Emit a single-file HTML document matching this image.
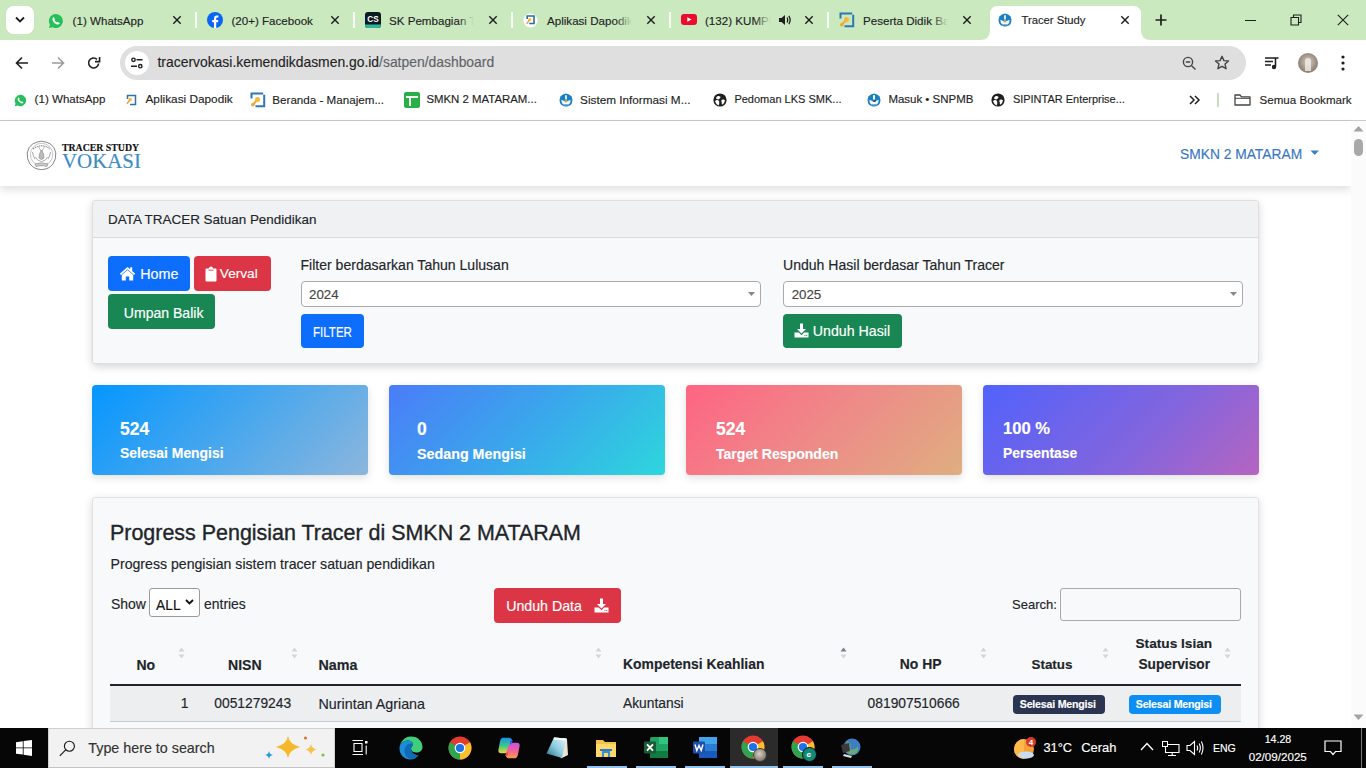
<!DOCTYPE html>
<html><head><meta charset="utf-8">
<style>
*{margin:0;padding:0;box-sizing:border-box}
html,body{width:1366px;height:768px;overflow:hidden;background:#fff;font-family:"Liberation Sans",sans-serif}
.a{position:absolute}
.t{position:absolute;white-space:nowrap;line-height:1;-webkit-text-stroke:0.15px currentColor}
#tabs{left:0;top:0;width:1366px;height:40px;background:#cae9bf}
.tabtxt{font-size:11.6px;color:#1f1f1f;top:14.5px}
.tx{font-size:14px;color:#1f1f1f}
.sep{position:absolute;top:12px;width:2px;height:17px;background:#fff;opacity:.9}
#toolbar{left:0;top:40px;width:1366px;height:46px;background:#fff}
#omni{left:120px;top:46px;width:1126px;height:34px;border-radius:17px;background:#dfdfdf}
#bm{left:0;top:86px;width:1366px;height:33px;background:#fff}
.bmt{font-size:11.6px;color:#1f1f1f;top:93.8px}
#pgline{left:0;top:120px;width:1366px;height:1px;background:#c9c9c9}
#page{left:0;top:121px;width:1351px;height:607px;background:#fff;overflow:hidden}
#scroll{left:1351px;top:120px;width:15px;height:608px;background:#f1f1f1}
#taskbar{left:0;top:728px;width:1366px;height:40px;background:#060606}

.btn{border-radius:4px}
.wt{color:#fff;font-size:13.8px}
.dk{color:#212529;font-size:13.95px}
.dk2{color:#444;font-size:13.31px}
.sel{background:#fff;border:1px solid #aaa;border-radius:4px}
.stat{top:385px;width:276px;height:90px;border-radius:4px;box-shadow:0 3px 8px rgba(0,0,0,.12)}
.sn{top:421px;font-size:17.5px;font-weight:bold;color:#fff}
.sl{top:446.5px;font-size:13.91px;font-weight:bold;color:#fff}
.th{top:657.9px;font-size:13.91px;font-weight:bold;color:#212529}
.td{top:697px;font-size:13.82px;color:#212529}
.badge{top:695px;width:92px;height:19px;border-radius:4px}
.bt{top:699px;font-size:10.6px;font-weight:bold;color:#fff;letter-spacing:-0.2px}
</style></head><body>
<!-- TAB STRIP -->
<div id="tabs" class="a">
  <div class="a" style="left:6px;top:6px;width:28px;height:28px;background:#fff;border-radius:8px"></div>
  <svg class="a" style="left:14px;top:16px" width="12" height="8" viewBox="0 0 12 8"><path d="M2 1.5 L6 5.5 L10 1.5" fill="none" stroke="#1f1f1f" stroke-width="1.8"/></svg>
  <!-- WA -->
  <svg class="a" style="left:48px;top:13px" width="16" height="16" viewBox="0 0 16 16"><path d="M8 1 A7 7 0 1 1 4.6 14.2 L1 15 L1.9 11.6 A7 7 0 0 1 8 1Z" fill="#25c05a"/><path d="M5.2 4.6 C5.6 4.2 6 4.3 6.2 4.7 L6.9 6.2 C7 6.5 6.8 6.8 6.5 7.1 C7 8.1 7.9 9 8.9 9.5 C9.2 9.2 9.5 9 9.8 9.1 L11.3 9.8 C11.7 10 11.8 10.4 11.4 10.8 C10.6 11.8 9.5 11.8 8 11 C6.5 10.2 5.3 8.9 4.7 7.4 C4.2 6.1 4.5 5.2 5.2 4.6Z" fill="#fff"/></svg>
  <div class="t tabtxt" style="left:72.6px">(1) WhatsApp</div>
  <svg class="a" style="left:172px;top:15px" width="10" height="10" viewBox="0 0 10 10"><path d="M1.3 1.3 L8.7 8.7 M8.7 1.3 L1.3 8.7" stroke="#1f1f1f" stroke-width="1.4"/></svg><div class="a" style="left:195px;top:12px;width:2px;height:16px;background:#fff;opacity:.85"></div>
  <!-- FB -->
  <svg class="a" style="left:207px;top:12px" width="16" height="16" viewBox="0 0 16 16"><circle cx="8" cy="8" r="8" fill="#0a66f0"/><path d="M9.2 16 V10.2 H11 L11.3 8 H9.2 V6.7 C9.2 6 9.5 5.6 10.3 5.6 H11.4 V3.6 C11 3.5 10.4 3.4 9.8 3.4 C8 3.4 7 4.4 7 6.3 V8 H5.2 V10.2 H7 V16Z" fill="#fff"/></svg>
  <div class="t tabtxt" style="left:231.4px">(20+) Facebook</div>
  <svg class="a" style="left:330px;top:15px" width="10" height="10" viewBox="0 0 10 10"><path d="M1.3 1.3 L8.7 8.7 M8.7 1.3 L1.3 8.7" stroke="#1f1f1f" stroke-width="1.4"/></svg><div class="a" style="left:353px;top:12px;width:2px;height:16px;background:#fff;opacity:.85"></div>
  <!-- CS -->
  <svg class="a" style="left:365px;top:12px" width="16" height="16" viewBox="0 0 16 16"><rect x="0" y="0" width="16" height="16" rx="3" fill="#0c1b22"/><path d="M0 12.5 H16 V13 A3 3 0 0 1 13 16 H3 A3 3 0 0 1 0 13Z" fill="#2fb59a"/><text x="8" y="10.2" text-anchor="middle" font-family="Liberation Sans" font-weight="bold" font-size="8.2" fill="#fff">CS</text></svg>
  <div class="t tabtxt" style="left:389px">SK Pembagian T</div>
  <div class="a" style="left:458px;top:9px;width:22px;height:22px;background:linear-gradient(90deg,rgba(202,233,191,0),#cae9bf 72%)"></div>
  <svg class="a" style="left:488px;top:15px" width="10" height="10" viewBox="0 0 10 10"><path d="M1.3 1.3 L8.7 8.7 M8.7 1.3 L1.3 8.7" stroke="#1f1f1f" stroke-width="1.4"/></svg><div class="a" style="left:511px;top:12px;width:2px;height:16px;background:#fff;opacity:.85"></div>
  <!-- Dapodik -->
  <svg class="a" style="left:523px;top:13px" width="15" height="15" viewBox="0 0 15 15"><circle cx="7.5" cy="7.5" r="7" fill="#fbfdff"/><path d="M4.2 6 V3 H11 V10.5 H6.2" fill="none" stroke="#2f6b9a" stroke-width="1.6"/><circle cx="6.8" cy="6.6" r="1.6" fill="#f3bd3a"/><path d="M6 7.5 L3.8 10.8" stroke="#e8a04a" stroke-width="1.4"/></svg>
  <div class="t tabtxt" style="left:547px">Aplikasi Dapodik</div>
  <div class="a" style="left:616px;top:9px;width:22px;height:22px;background:linear-gradient(90deg,rgba(202,233,191,0),#cae9bf 72%)"></div>
  <svg class="a" style="left:646px;top:15px" width="10" height="10" viewBox="0 0 10 10"><path d="M1.3 1.3 L8.7 8.7 M8.7 1.3 L1.3 8.7" stroke="#1f1f1f" stroke-width="1.4"/></svg><div class="a" style="left:669px;top:12px;width:2px;height:16px;background:#fff;opacity:.85"></div>
  <!-- YT -->
  <svg class="a" style="left:681px;top:14px" width="16" height="11" viewBox="0 0 16 11"><rect x="0" y="0" width="16" height="11" rx="3" fill="#ec0a2d"/><path d="M6.3 3.2 L10.6 5.5 L6.3 7.8Z" fill="#fff"/></svg>
  <div class="t tabtxt" style="left:705px">(132) KUMPU</div>
  <div class="a" style="left:755px;top:9px;width:22px;height:22px;background:linear-gradient(90deg,rgba(202,233,191,0),#cae9bf 72%)"></div>
  <svg class="a" style="left:778px;top:13px" width="14" height="14" viewBox="0 0 14 14"><path d="M1 5 H3.5 L7 2 V12 L3.5 9 H1Z" fill="#1f1f1f"/><path d="M9 4.5 Q10.5 7 9 9.5 M10.8 2.8 Q13.5 7 10.8 11.2" fill="none" stroke="#1f1f1f" stroke-width="1.3"/></svg>
  <svg class="a" style="left:804px;top:15px" width="10" height="10" viewBox="0 0 10 10"><path d="M1.3 1.3 L8.7 8.7 M8.7 1.3 L1.3 8.7" stroke="#1f1f1f" stroke-width="1.4"/></svg><div class="a" style="left:827px;top:12px;width:2px;height:16px;background:#fff;opacity:.85"></div>
  <!-- Peserta -->
  <svg class="a" style="left:839px;top:12px" width="16" height="16" viewBox="0 0 16 16"><path d="M1.5 6.5 V1.5 H13.2 M14.2 2.8 V14.2 H5.5" fill="none" stroke="#2d78b4" stroke-width="2"/><circle cx="7.5" cy="7.5" r="2.5" fill="#f5b73c"/><path d="M6.3 9 L3 12.5" stroke="#eeaa35" stroke-width="2"/><circle cx="2.8" cy="12.8" r="1.8" fill="#eda82f"/></svg>
  <div class="t tabtxt" style="left:863px">Peserta Didik Ba</div>
  <div class="a" style="left:932px;top:9px;width:22px;height:22px;background:linear-gradient(90deg,rgba(202,233,191,0),#cae9bf 72%)"></div>
  <svg class="a" style="left:962px;top:15px" width="10" height="10" viewBox="0 0 10 10"><path d="M1.3 1.3 L8.7 8.7 M8.7 1.3 L1.3 8.7" stroke="#1f1f1f" stroke-width="1.4"/></svg>
  <!-- active tab -->
  <svg class="a" style="left:980px;top:6px" width="171" height="34" viewBox="0 0 171 34"><path d="M0 34 Q10 34 10 24 V8 Q10 0 18 0 H153 Q161 0 161 8 V24 Q161 34 171 34Z" fill="#fff"/></svg>
  <svg class="a" style="left:998px;top:12.5px" width="14" height="14" viewBox="0 0 14 14"><path d="M7 0.4 Q10.5 0.6 12.6 3.5 Q14 6.5 13 10 Q11.5 13.4 7 13.6 Q2.5 13.4 1 10 Q0 6.5 1.4 3.5 Q3.5 0.6 7 0.4Z" fill="#1b7fc0"/><path d="M2.3 6.8 Q7 9.5 11.7 6.8 Q11.6 10.2 9.8 11.2 H4.2 Q2.4 10.2 2.3 6.8Z" fill="#f2f8fc"/><circle cx="7" cy="8.2" r="1.3" fill="#c9a85a"/><path d="M6 2.2 H8 V6.5 H6Z" fill="#cfe6f6"/><path d="M4 11.8 H10" stroke="#9cc8e8" stroke-width=".8"/></svg>
  <div class="t tabtxt" style="left:1021.5px;font-size:11.25px">Tracer Study</div>
  <svg class="a" style="left:1120px;top:15px" width="10" height="10" viewBox="0 0 10 10"><path d="M1.3 1.3 L8.7 8.7 M8.7 1.3 L1.3 8.7" stroke="#1f1f1f" stroke-width="1.4"/></svg>
  <svg class="a" style="left:1155px;top:14px" width="12" height="12" viewBox="0 0 12 12"><path d="M6 0.5 V11.5 M0.5 6 H11.5" stroke="#1f1f1f" stroke-width="1.7"/></svg>
  <!-- window controls -->
  <div class="a" style="left:1245px;top:20px;width:11px;height:1px;background:#1f1f1f"></div>
  <svg class="a" style="left:1290px;top:14px" width="12" height="12" viewBox="0 0 12 12"><path d="M1 3.5 H8.5 V11 H1Z M3.5 3.5 V1 H11 V8.5 H8.5" fill="none" stroke="#1f1f1f" stroke-width="1.1"/></svg>
  <svg class="a" style="left:1337px;top:14px" width="12" height="12" viewBox="0 0 12 12"><path d="M0.8 0.8 L11.2 11.2 M11.2 0.8 L0.8 11.2" stroke="#1f1f1f" stroke-width="1.1"/></svg>
</div>
<!-- TOOLBAR -->
<div id="toolbar" class="a"></div>
<svg class="a" style="left:15px;top:56px" width="14" height="14" viewBox="0 0 14 14"><path d="M13 7 H1.8 M7 1.5 L1.5 7 L7 12.5" fill="none" stroke="#1f1f1f" stroke-width="1.6"/></svg>
<svg class="a" style="left:51px;top:56px" width="14" height="14" viewBox="0 0 14 14"><path d="M1 7 H12.2 M7 1.5 L12.5 7 L7 12.5" fill="none" stroke="#9c9c9c" stroke-width="1.6"/></svg>
<svg class="a" style="left:87px;top:56px" width="14" height="14" viewBox="0 0 14 14"><path d="M11.6 7.5 A5 5 0 1 1 10 3.3" fill="none" stroke="#1f1f1f" stroke-width="1.6"/><path d="M12.6 1 V5.6 H8" fill="none" stroke="#1f1f1f" stroke-width="1.6"/></svg>
<div id="omni" class="a"></div>
<div class="a" style="left:125px;top:51px;width:24px;height:24px;border-radius:50%;background:#fff"></div>
<svg class="a" style="left:130px;top:56px" width="14" height="14" viewBox="0 0 14 14"><circle cx="3.5" cy="3.8" r="1.7" fill="none" stroke="#1f1f1f" stroke-width="1.4"/><path d="M6.5 3.8 H12.5 M1 10.2 H7" stroke="#1f1f1f" stroke-width="1.4"/><circle cx="10.3" cy="10.2" r="1.7" fill="none" stroke="#1f1f1f" stroke-width="1.4"/></svg>
<div class="t tx" style="left:157.5px;top:56px;font-size:13.9px">tracervokasi.kemendikdasmen.go.id<span style="color:#5f6368">/satpen/dashboard</span></div>
<svg class="a" style="left:1182px;top:56px" width="15" height="15" viewBox="0 0 15 15"><circle cx="6" cy="6" r="4.6" fill="none" stroke="#444" stroke-width="1.4"/><path d="M3.8 6 H8.2 M9.4 9.4 L13.5 13.5" stroke="#444" stroke-width="1.4"/></svg>
<svg class="a" style="left:1214px;top:55px" width="16" height="16" viewBox="0 0 16 16"><path d="M8 1.3 L9.9 5.6 L14.5 6 L11 9.1 L12.1 13.7 L8 11.3 L3.9 13.7 L5 9.1 L1.5 6 L6.1 5.6Z" fill="none" stroke="#444" stroke-width="1.4" stroke-linejoin="round"/></svg>
<svg class="a" style="left:1264px;top:56px" width="16" height="14" viewBox="0 0 16 14"><path d="M1 2 H11 M1 5.5 H9 M1 9 H7" stroke="#1f1f1f" stroke-width="1.6"/><path d="M11.5 10.5 V2 H14.5" fill="none" stroke="#1f1f1f" stroke-width="1.6"/><circle cx="10" cy="11" r="2.2" fill="#1f1f1f"/></svg>
<div class="a" style="left:1298px;top:53px;width:20px;height:20px;border-radius:50%;background:radial-gradient(circle at 50% 45%,#d8d4cc 0%,#a59a8c 45%,#6e6053 100%)"></div>
<div class="a" style="left:1305px;top:58px;width:6px;height:13px;border-radius:3px 3px 0 0;background:#efece6;opacity:.8"></div>
<svg class="a" style="left:1340px;top:55px" width="6" height="16" viewBox="0 0 6 16"><circle cx="3" cy="2" r="1.6" fill="#1f1f1f"/><circle cx="3" cy="8" r="1.6" fill="#1f1f1f"/><circle cx="3" cy="14" r="1.6" fill="#1f1f1f"/></svg>
<!-- BOOKMARKS -->
<div id="bm" class="a"></div>
<svg class="a" style="left:14px;top:93.5px" width="13" height="13" viewBox="0 0 16 16"><path d="M8 1 A7 7 0 1 1 4.6 14.2 L1 15 L1.9 11.6 A7 7 0 0 1 8 1Z" fill="#25c05a"/><path d="M5.2 4.6 C5.6 4.2 6 4.3 6.2 4.7 L6.9 6.2 C7 6.5 6.8 6.8 6.5 7.1 C7 8.1 7.9 9 8.9 9.5 C9.2 9.2 9.5 9 9.8 9.1 L11.3 9.8 C11.7 10 11.8 10.4 11.4 10.8 C10.6 11.8 9.5 11.8 8 11 C6.5 10.2 5.3 8.9 4.7 7.4 C4.2 6.1 4.5 5.2 5.2 4.6Z" fill="#fff"/></svg>
<div class="t bmt" style="left:34.6px;font-size:11.58px">(1) WhatsApp</div>
<svg class="a" style="left:125px;top:94px" width="12" height="12" viewBox="0 0 12 12"><path d="M2.5 5 V1.5 H10.5 V10.5 H5" fill="none" stroke="#2f72a8" stroke-width="1.5"/><circle cx="5.3" cy="5.5" r="1.7" fill="#f3bd3a"/><path d="M4.5 6.5 L2 9.8" stroke="#e8a04a" stroke-width="1.6"/></svg>
<div class="t bmt" style="left:145.5px;font-size:11.81px">Aplikasi Dapodik</div>
<svg class="a" style="left:250px;top:92px" width="16" height="16" viewBox="0 0 16 16"><path d="M1.5 6.5 V1.5 H13.2 M14.2 2.8 V14.2 H5.5" fill="none" stroke="#2d78b4" stroke-width="2"/><circle cx="7.5" cy="7.5" r="2.5" fill="#f5b73c"/><path d="M6.3 9 L3 12.5" stroke="#eeaa35" stroke-width="2"/><circle cx="2.8" cy="12.8" r="1.8" fill="#eda82f"/></svg>
<div class="t bmt" style="left:272.3px;font-size:11.64px">Beranda - Manajem...</div>
<svg class="a" style="left:404px;top:92px" width="16" height="16" viewBox="0 0 16 16"><rect x="0" y="0" width="16" height="16" rx="2" fill="#2aae48"/><path d="M2 5 H14 M6 5 V14" stroke="#effff2" stroke-width="2"/></svg>
<div class="t bmt" style="left:426.4px;font-size:11.42px">SMKN 2 MATARAM...</div>
<svg class="a" style="left:559px;top:93px" width="14" height="14" viewBox="0 0 14 14"><path d="M7 0.4 Q10.5 0.6 12.6 3.5 Q14 6.5 13 10 Q11.5 13.4 7 13.6 Q2.5 13.4 1 10 Q0 6.5 1.4 3.5 Q3.5 0.6 7 0.4Z" fill="#1b7fc0"/><path d="M2.3 6.8 Q7 9.5 11.7 6.8 Q11.6 10.2 9.8 11.2 H4.2 Q2.4 10.2 2.3 6.8Z" fill="#f2f8fc"/><circle cx="7" cy="8.2" r="1.3" fill="#c9a85a"/><path d="M6 2.2 H8 V6.5 H6Z" fill="#cfe6f6"/><path d="M4 11.8 H10" stroke="#9cc8e8" stroke-width=".8"/></svg>
<div class="t bmt" style="left:580.1px;font-size:11.76px">Sistem Informasi M...</div>
<svg class="a" style="left:713px;top:93px" width="14" height="14" viewBox="0 0 14 14"><circle cx="7" cy="7" r="6.6" fill="#1f1f1f"/><path d="M2 8.3 Q3.3 6.6 5.2 7.3 Q6.6 8 6.2 9.6 Q6.6 11.3 5.5 12.6 Q3 11.3 2 8.3Z M4.3 3.2 Q6 2.6 7.2 3.6 Q8 4.8 6.8 5.4 Q5.6 5.6 5.8 6.6 Q4.2 6.6 3.2 5.8 Q2.6 4.6 4.3 3.2Z M8.7 6.8 Q10.5 6.2 12 7.2 Q11.6 10 9.4 11.8 Q8.5 10.8 8.8 9.6 Q7.8 8.3 8.7 6.8Z" fill="#fff"/></svg>
<div class="t bmt" style="left:734.4px;font-size:11.02px">Pedoman LKS SMK...</div>
<svg class="a" style="left:867px;top:92.5px" width="14" height="14" viewBox="0 0 14 14"><path d="M7 0.4 Q10.5 0.6 12.6 3.5 Q14 6.5 13 10 Q11.5 13.4 7 13.6 Q2.5 13.4 1 10 Q0 6.5 1.4 3.5 Q3.5 0.6 7 0.4Z" fill="#1b7fc0"/><path d="M2.3 6.8 Q7 9.5 11.7 6.8 Q11.6 10.2 9.8 11.2 H4.2 Q2.4 10.2 2.3 6.8Z" fill="#f2f8fc"/><path d="M5 8.5 L9 7.3 L8.5 9 Z" fill="#333"/><path d="M6 2.2 H8 V6.5 H6Z" fill="#fff"/><path d="M4 11.8 H10" stroke="#9cc8e8" stroke-width=".8"/></svg>
<div class="t bmt" style="left:888.4px;font-size:11.48px">Masuk • SNPMB</div>
<svg class="a" style="left:991px;top:93px" width="14" height="14" viewBox="0 0 14 14"><circle cx="7" cy="7" r="6.6" fill="#1f1f1f"/><path d="M2 8.3 Q3.3 6.6 5.2 7.3 Q6.6 8 6.2 9.6 Q6.6 11.3 5.5 12.6 Q3 11.3 2 8.3Z M4.3 3.2 Q6 2.6 7.2 3.6 Q8 4.8 6.8 5.4 Q5.6 5.6 5.8 6.6 Q4.2 6.6 3.2 5.8 Q2.6 4.6 4.3 3.2Z M8.7 6.8 Q10.5 6.2 12 7.2 Q11.6 10 9.4 11.8 Q8.5 10.8 8.8 9.6 Q7.8 8.3 8.7 6.8Z" fill="#fff"/></svg>
<div class="t bmt" style="left:1012.9px;font-size:10.98px">SIPINTAR Enterprise...</div>
<svg class="a" style="left:1189px;top:95px" width="11" height="10" viewBox="0 0 11 10"><path d="M1 1 L5 5 L1 9 M6 1 L10 5 L6 9" fill="none" stroke="#1f1f1f" stroke-width="1.5"/></svg>
<div class="a" style="left:1217px;top:93px;width:2px;height:14px;background:#c8dcc0"></div>
<svg class="a" style="left:1234px;top:94px" width="17" height="12" viewBox="0 0 17 12"><path d="M1 1 H6 L7.5 2.8 H16 V11 H1Z" fill="none" stroke="#444" stroke-width="1.3" stroke-linejoin="round"/><path d="M1 4.3 H16" stroke="#444" stroke-width="1"/></svg>
<div class="t bmt" style="left:1259.5px">Semua Bookmark</div>
<div id="pgline" class="a"></div>

<!-- PAGE -->
<div id="page" class="a">
</div>
<div class="a" style="left:0;top:121px;width:1351px;height:65px;background:#fff;box-shadow:0 4px 8px rgba(0,0,0,.12)"></div>
<!-- logo -->
<svg class="a" style="left:26px;top:140px" width="31" height="31" viewBox="0 0 31 31">
 <path d="M15.5 1.2 Q20 1.5 24.5 4 Q28.8 7 29.8 13 Q30.2 19 27 24 Q23 29.3 15.5 29.6 Q8 29.3 4 24 Q0.8 19 1.2 13 Q2.2 7 6.5 4 Q11 1.5 15.5 1.2Z" fill="#fff" stroke="#777" stroke-width="0.9"/>
 <circle cx="15.6" cy="14.5" r="11.2" fill="none" stroke="#aaa" stroke-width="0.7"/>
 <path d="M7 9 Q15.5 2.5 24 9" fill="none" stroke="#999" stroke-width="1.3" stroke-dasharray="1.4 0.8"/>
 <path d="M12.5 6.5 L15.5 12 L18.5 6.5" fill="none" stroke="#aaa" stroke-width="0.8"/>
 <path d="M15.5 10 Q12.5 14 13 18 Q15.5 21 18 18 Q18.5 14 15.5 10Z" fill="#bbb" stroke="#888" stroke-width="0.6"/>
 <path d="M9.5 17 Q11 21 15.5 21.5 Q20 21 21.5 17" fill="none" stroke="#999" stroke-width="0.8"/>
 <path d="M6.5 12 Q7 16 9 19 M24.5 12 Q24 16 22 19" fill="none" stroke="#999" stroke-width="0.9"/>
 <path d="M9 24 Q15.5 21.5 22 24 L21 26.5 Q15.5 24.5 10 26.5Z" fill="#ccc" stroke="#888" stroke-width="0.6"/>
</svg>
<div class="t" style="left:62px;top:142.5px;font-family:'Liberation Serif',serif;font-weight:bold;font-size:9.8px;color:#111">TRACER STUDY</div>
<div class="t" style="left:62px;top:151.3px;font-family:'Liberation Serif',serif;font-size:20.9px;color:#3b8cc0">VOKASI</div>
<div class="t" style="left:1180px;top:148.2px;font-size:13.8px;color:#3877c0">SMKN 2 MATARAM</div>
<svg class="a" style="left:1310px;top:150px" width="10" height="6"><path d="M0.5 0.5 H9 L4.75 5 Z" fill="#3b7fc4"/></svg>

<!-- card 1 -->
<div class="a" style="left:92px;top:200px;width:1167px;height:164px;background:#f8f9fa;border:1px solid #dcdee0;border-radius:3px;box-shadow:0 3px 9px rgba(0,0,0,.16);overflow:hidden">
  <div class="a" style="left:0;top:0;width:1167px;height:37px;background:#f0f1f3;border-bottom:1px solid #d9dbde"></div>
</div>
<div class="t" style="left:108px;top:213px;font-size:13.45px;color:#212529">DATA TRACER Satuan Pendidikan</div>
<div class="a btn" style="left:108px;top:256px;width:82px;height:35px;background:#0d6efd"></div>
<div class="a btn" style="left:194px;top:256px;width:77px;height:35px;background:#dc3545"></div>
<div class="a btn" style="left:108px;top:294px;width:107px;height:35px;background:#198754"></div>
<svg class="a" style="left:119px;top:266px" width="17" height="15" viewBox="0 0 17 15"><path d="M8.5 1 L0.8 7.8 L2 9 L8.5 3.2 L15 9 L16.2 7.8 L13.2 5.1 V1.2 H11.2 V3.3Z" fill="#fff"/><path d="M2.8 9 L8.5 4 L14.2 9 V14.6 H10.2 V10.6 H6.8 V14.6 H2.8Z" fill="#fff"/></svg>
<div class="t wt" style="left:140.3px;top:267px;font-size:14.3px">Home</div>
<svg class="a" style="left:205px;top:266px" width="12" height="16" viewBox="0 0 12 16"><path d="M1.5 2.5 H3.8 Q4.3 0.6 6 0.6 Q7.7 0.6 8.2 2.5 H10.5 Q11.5 2.5 11.5 3.5 V14.5 Q11.5 15.5 10.5 15.5 H1.5 Q0.5 15.5 0.5 14.5 V3.5 Q0.5 2.5 1.5 2.5Z" fill="#fff"/><path d="M3.5 4.2 H8.5" stroke="#c9434f" stroke-width="0.9"/></svg>
<div class="t wt" style="left:219.8px;top:267px;font-size:13.65px">Verval</div>
<div class="t wt" style="left:123.8px;top:305.5px;font-size:14.06px">Umpan Balik</div>
<div class="t dk" style="left:300.5px;top:258.2px;font-size:14.05px">Filter berdasarkan Tahun Lulusan</div>
<div class="a sel" style="left:301px;top:281px;width:460px;height:26px"></div>
<div class="t dk2" style="left:309px;top:287.8px">2024</div>
<svg class="a" style="left:748px;top:292px" width="7" height="4"><path d="M0 0 H7 L3.5 4 Z" fill="#888"/></svg>
<div class="a btn" style="left:301px;top:314px;width:63px;height:34px;background:#0d6efd"></div>
<div class="t wt" style="left:312.8px;top:325.5px;font-size:13.75px;transform:scaleX(0.84);transform-origin:0 0">FILTER</div>
<div class="t dk" style="left:783px;top:258.2px;font-size:14.05px">Unduh Hasil berdasar Tahun Tracer</div>
<div class="a sel" style="left:783px;top:281px;width:460px;height:26px"></div>
<div class="t dk2" style="left:791.7px;top:287.8px">2025</div>
<svg class="a" style="left:1230px;top:292px" width="7" height="4"><path d="M0 0 H7 L3.5 4 Z" fill="#888"/></svg>
<div class="a btn" style="left:783px;top:314px;width:119px;height:34px;background:#198754"></div>
<svg class="a" style="left:794px;top:323px" width="15" height="15" viewBox="0 0 15 15"><path d="M6 0.5 H9 V6 H12 L7.5 10.5 L3 6 H6Z" fill="#fff"/><path d="M0.5 9.5 H4.8 L7.5 12.2 L10.2 9.5 H14.5 V14.5 H0.5Z" fill="#fff"/><circle cx="11" cy="12.3" r=".6" fill="#198754"/><circle cx="12.8" cy="12.3" r=".6" fill="#198754"/></svg>
<div class="t wt" style="left:812.8px;top:324px;font-size:14.2px">Unduh Hasil</div>

<!-- stat cards -->
<div class="a stat" style="left:92px;background:linear-gradient(135deg,#0596ff 0%,#55aaea 60%,#8cb6dc 100%)"></div>
<div class="a stat" style="left:389px;background:linear-gradient(135deg,#4a7cf8 0%,#3aa7ec 50%,#2dd6dd 100%)"></div>
<div class="a stat" style="left:686px;background:linear-gradient(135deg,#fe6483 0%,#ee8a88 50%,#dfae80 100%)"></div>
<div class="a stat" style="left:983px;background:linear-gradient(135deg,#5162fb 0%,#8465dd 60%,#b565c0 100%)"></div>
<div class="t sn" style="left:120px">524</div><div class="t sl" style="left:120px">Selesai Mengisi</div>
<div class="t sn" style="left:417px">0</div><div class="t sl" style="left:417px;font-size:14.3px">Sedang Mengisi</div>
<div class="t sn" style="left:716px">524</div><div class="t sl" style="left:716px;font-size:14.05px">Target Responden</div>
<div class="t sn" style="left:1003px;font-size:16.6px">100 %</div><div class="t sl" style="left:1003px">Persentase</div>

<!-- table card -->
<div class="a" style="left:92px;top:497px;width:1167px;height:260px;background:#f8f9fa;border:1px solid #e0e2e4;border-radius:3px;box-shadow:0 3px 9px rgba(0,0,0,.16)"></div>
<div class="t" style="left:110px;top:522.6px;font-size:21.45px;color:#212529;-webkit-text-stroke:0.35px #212529">Progress Pengisian Tracer di SMKN 2 MATARAM</div>
<div class="t dk" style="left:110.5px;top:556.5px;font-size:14.14px">Progress pengisian sistem tracer satuan pendidikan</div>
<div class="t dk" style="left:111px;top:598.3px">Show</div>
<div class="a" style="left:149px;top:588px;width:51px;height:29px;background:#fff;border:1px solid #9a9a9a;border-radius:3px"></div>
<div class="t" style="left:156px;top:598.5px;font-size:13.8px;color:#111">ALL</div>
<svg class="a" style="left:185px;top:599px" width="9" height="6"><path d="M1 1 L4.5 4.5 L8 1" fill="none" stroke="#111" stroke-width="1.8"/></svg>
<div class="t dk" style="left:204px;top:598.3px">entries</div>
<div class="a btn" style="left:494px;top:588px;width:127px;height:35px;background:#dc3545"></div>
<div class="t wt" style="left:506.2px;top:598.8px;font-size:14.2px">Unduh Data</div>
<svg class="a" style="left:594px;top:598px" width="15" height="15" viewBox="0 0 15 15"><path d="M6 0.5 H9 V6 H12 L7.5 10.5 L3 6 H6Z" fill="#fff"/><path d="M0.5 9.5 H4.8 L7.5 12.2 L10.2 9.5 H14.5 V14.5 H0.5Z" fill="#fff"/><circle cx="11" cy="12.3" r=".6" fill="#dc3545"/><circle cx="12.8" cy="12.3" r=".6" fill="#dc3545"/></svg>
<div class="t dk" style="left:1012px;top:598px;font-size:13px">Search:</div>
<div class="a" style="left:1060px;top:588px;width:181px;height:33px;border:1px solid #a9a9a9;border-radius:3px"></div>

<!-- table -->
<div class="a" style="left:110px;top:684px;width:1131px;height:2px;background:#212529"></div>
<div class="a" style="left:110px;top:686px;width:1131px;height:35px;background:#eceef0"></div>
<div class="a" style="left:110px;top:721px;width:1131px;height:1px;background:#c8cacc"></div>
<div class="t th" style="left:136.5px;font-size:14.0px">No</div>
<div class="t th" style="left:228px;font-size:14.1px">NISN</div>
<div class="t th" style="left:318.5px;font-size:14.3px">Nama</div>
<div class="t th" style="left:623px">Kompetensi Keahlian</div>
<div class="t th" style="left:899.8px">No HP</div>
<div class="t th" style="left:1031.5px;font-size:13.42px">Status</div>
<div class="t th" style="left:1135.5px;top:636.9px;font-size:13.67px">Status Isian</div>
<div class="t th" style="left:1138.4px;font-size:13.71px">Supervisor</div>
<svg class="a" style="left:178.0px;top:647px" width="7" height="12" viewBox="0 0 7 12"><path d="M0.5 4.5 L3.5 0.5 L6.5 4.5Z" fill="#d3d6d9"/><path d="M0.5 7.5 L3.5 11.5 L6.5 7.5Z" fill="#d3d6d9"/></svg>
<svg class="a" style="left:291.0px;top:647px" width="7" height="12" viewBox="0 0 7 12"><path d="M0.5 4.5 L3.5 0.5 L6.5 4.5Z" fill="#d3d6d9"/><path d="M0.5 7.5 L3.5 11.5 L6.5 7.5Z" fill="#d3d6d9"/></svg>
<svg class="a" style="left:594.9px;top:647px" width="7" height="12" viewBox="0 0 7 12"><path d="M0.5 4.5 L3.5 0.5 L6.5 4.5Z" fill="#d3d6d9"/><path d="M0.5 7.5 L3.5 11.5 L6.5 7.5Z" fill="#d3d6d9"/></svg>
<svg class="a" style="left:839.8px;top:647px" width="7" height="12" viewBox="0 0 7 12"><path d="M0.5 4.5 L3.5 0.5 L6.5 4.5Z" fill="#7a7f85"/><path d="M0.5 7.5 L3.5 11.5 L6.5 7.5Z" fill="#d3d6d9"/></svg>
<svg class="a" style="left:979.7px;top:647px" width="7" height="12" viewBox="0 0 7 12"><path d="M0.5 4.5 L3.5 0.5 L6.5 4.5Z" fill="#d3d6d9"/><path d="M0.5 7.5 L3.5 11.5 L6.5 7.5Z" fill="#d3d6d9"/></svg>
<svg class="a" style="left:1101.8px;top:647px" width="7" height="12" viewBox="0 0 7 12"><path d="M0.5 4.5 L3.5 0.5 L6.5 4.5Z" fill="#d3d6d9"/><path d="M0.5 7.5 L3.5 11.5 L6.5 7.5Z" fill="#d3d6d9"/></svg>
<svg class="a" style="left:1224.2px;top:647px" width="7" height="12" viewBox="0 0 7 12"><path d="M0.5 4.5 L3.5 0.5 L6.5 4.5Z" fill="#d3d6d9"/><path d="M0.5 7.5 L3.5 11.5 L6.5 7.5Z" fill="#d3d6d9"/></svg>
<div class="t td" style="left:180.8px">1</div>
<div class="t td" style="left:214.3px">0051279243</div>
<div class="t td" style="left:318.5px;font-size:14.3px">Nurintan Agriana</div>
<div class="t td" style="left:623px">Akuntansi</div>
<div class="t td" style="left:867.6px">081907510666</div>
<div class="a badge" style="left:1013px;background:#2b3450"></div>
<div class="a badge" style="left:1129px;background:#0d8ef5"></div>
<div class="t bt" style="left:1019.8px">Selesai Mengisi</div>
<div class="t bt" style="left:1135.8px">Selesai Mengisi</div>
<div class="a" style="left:1351px;top:121px;width:15px;height:607px;background:#fbfbfb"></div>
<svg class="a" style="left:1353px;top:125px" width="11" height="7" viewBox="0 0 11 7"><path d="M0.5 6.5 L5.5 1 L10.5 6.5Z" fill="#a3a3a3"/></svg>
<div class="a" style="left:1354px;top:139px;width:9px;height:17px;border-radius:4.5px;background:#a8a8a8"></div>
<svg class="a" style="left:1353px;top:714px" width="11" height="7" viewBox="0 0 11 7"><path d="M0.5 0.5 L5.5 6 L10.5 0.5Z" fill="#a3a3a3"/></svg>

<!-- TASKBAR -->
<div id="taskbar" class="a"></div>
<svg class="a" style="left:16px;top:740px" width="16" height="16" viewBox="0 0 16 16"><path d="M0 2.2 L6.8 1.2 V7.4 H0Z M7.6 1.1 L16 0 V7.4 H7.6Z M0 8.2 H6.8 V14.6 L0 13.7Z M7.6 8.2 H16 V16 L7.6 14.8Z" fill="#fff"/></svg>
<div class="a" style="left:48px;top:728px;width:287px;height:40px;background:#f2f2f2;border:1px solid #cfcfcf;border-bottom:1px solid #c4c4c4"></div>
<svg class="a" style="left:59px;top:739.5px" width="17" height="17" viewBox="0 0 17 17"><circle cx="10.4" cy="6.2" r="5" fill="none" stroke="#1a1a1a" stroke-width="1.15"/><path d="M6.9 9.7 L0.8 15.8" stroke="#1a1a1a" stroke-width="1.2"/></svg>
<div class="t" style="left:88.3px;top:741.4px;font-size:14.3px;color:#333">Type here to search</div>
<svg class="a" style="left:262px;top:734px" width="66" height="28" viewBox="0 0 66 28"><path d="M26 2 Q27.5 10.5 38 13 Q27.5 15.5 26 24 Q24.5 15.5 14 13 Q24.5 10.5 26 2Z" fill="#f5b82a"/><path d="M49 10 Q49.8 14.3 54.5 15.5 Q49.8 16.7 49 21 Q48.2 16.7 43.5 15.5 Q48.2 14.3 49 10Z" fill="#f8c24a"/><path d="M7 17 Q7.5 20.5 11 21 Q7.5 21.5 7 25 Q6.5 21.5 3 21 Q6.5 20.5 7 17Z" fill="#2b9be0"/><circle cx="43.5" cy="4" r="1.6" fill="#e0703a"/><circle cx="61" cy="21" r="1.6" fill="#7cc24a"/></svg>
<svg class="a" style="left:352px;top:740px" width="16" height="15" viewBox="0 0 16 15"><path d="M0.5 0.5 H11 M0.5 14.5 H11 M2 3.5 H10 V11.5 H2Z" fill="none" stroke="#fff" stroke-width="1.1"/><rect x="13" y="1" width="2.5" height="2.5" fill="#fff"/><path d="M14.2 5.5 V14.5" stroke="#fff" stroke-width="1.1"/></svg>
<!-- edge -->
<svg class="a" style="left:399px;top:736px" width="24" height="24" viewBox="0 0 24 24"><defs><linearGradient id="eg1" x1="0" y1="0" x2="1" y2="1"><stop offset="0" stop-color="#33c07a"/><stop offset=".5" stop-color="#1fa0d8"/><stop offset="1" stop-color="#0c59a4"/></linearGradient></defs><path d="M12 0.5 C19 0.5 23.5 5.5 23.5 11 C23.5 14.5 21 16.5 17.5 16.5 C14 16.5 12 15 12 12.5 C12 10.5 14 9.5 14 8.5 C14 6 11 4.5 8.5 4.5 C4 4.5 0.5 8.5 0.5 12.5 C0.5 7 5 0.5 12 0.5Z" fill="#3fcf7a"/><path d="M0.5 12.5 C0.5 8.5 4 4.5 8.5 4.5 C11 4.5 14 6 14 8.5 C14 9.5 12 10.5 12 12.5 C12 17 16 19.5 19.5 19 C17.5 22 14.5 23.5 11.5 23.5 C5 23.5 0.5 18.5 0.5 12.5Z" fill="#1a8fd8"/><path d="M12 12.5 C12 17 16 19.5 19.5 19 C18 21 16 22.5 13 23 C8 23 5.5 19 5.5 15 C5.5 11 8 8 11 7.5 C13 7.8 14 8.5 14 8.5 C14 9.5 12 10.5 12 12.5Z" fill="#0e5aa8" opacity=".7"/></svg>
<!-- chrome -->
<svg class="a" style="left:448px;top:736px" width="24" height="24" viewBox="0 0 24 24"><circle cx="12" cy="12" r="11.5" fill="#e33b2e"/><path d="M12 12 L22 6.3 A11.5 11.5 0 0 1 12 23.5Z" fill="#f8c02a"/><path d="M12 12 L12 23.5 A11.5 11.5 0 0 1 2 6.3Z" fill="#2ea44f"/><circle cx="12" cy="12" r="5.3" fill="#fff"/><circle cx="12" cy="12" r="4.1" fill="#1a73e8"/></svg>
<!-- copilot -->
<svg class="a" style="left:497px;top:737px" width="24" height="22" viewBox="0 0 24 22"><defs><linearGradient id="cp1" x1="0" y1="0" x2="0" y2="1"><stop offset="0" stop-color="#1e8ff0"/><stop offset=".5" stop-color="#35c985"/><stop offset="1" stop-color="#f2d43a"/></linearGradient><linearGradient id="cp2" x1="0" y1="0" x2="0" y2="1"><stop offset="0" stop-color="#c653e6"/><stop offset=".5" stop-color="#f0609a"/><stop offset="1" stop-color="#fb9a4c"/></linearGradient></defs>
<path d="M6 0.8 H12 Q14.5 0.8 15.5 3.5 L13 12 Q11.5 16.5 8 16.2 H4 Q0.8 16.2 1.5 12.5 L3 4.5 Q3.8 0.8 6 0.8Z" fill="url(#cp1)"/>
<path d="M18 21.2 H12 Q9.5 21.2 8.5 18.5 L11 10 Q12.5 5.5 16 5.8 H20 Q23.2 5.8 22.5 9.5 L21 17.5 Q20.2 21.2 18 21.2Z" fill="url(#cp2)"/>
<path d="M13 4 Q14.5 2.5 15.5 3.5 L14 8 Q12.5 6 13 4Z" fill="#2c5fd8"/>
<path d="M11 18 Q9.5 19.5 8.5 18.5 L10 14 Q11.5 16 11 18Z" fill="#e9553a"/>
</svg>
<!-- notepad-ish -->
<svg class="a" style="left:545px;top:736px" width="24" height="24" viewBox="0 0 24 24"><defs><linearGradient id="np1" x1="0" y1="1" x2="1" y2="0"><stop offset="0" stop-color="#1e6f86"/><stop offset=".5" stop-color="#8fcde0"/><stop offset="1" stop-color="#e8f6fa"/></linearGradient></defs>
<path d="M9 1.5 L22 2.5 L23 19 L16 22.5Z" fill="#e9e6d6"/>
<path d="M9 1.5 L21 2.5 L17 22 L1.5 17.5Z" fill="url(#np1)"/>
<path d="M9 1.5 L21 2.5 L20.5 4.5 L8.5 3.5Z" fill="#f4fbfd"/>
</svg>
<!-- explorer -->
<svg class="a" style="left:595px;top:738px" width="22" height="20" viewBox="0 0 22 20"><path d="M1 2 H8 L10 4 H21 V19 H1Z" fill="#f0c24c"/><path d="M1 6 H21 V19 H1Z" fill="#ffd86a"/><path d="M7 13 H15 V19 H13 V15 H9 V19 H7Z" fill="#3a8fd6"/><rect x="5" y="11" width="12" height="2" fill="#2f7bc0"/></svg>
<div class="a" style="left:587px;top:766px;width:40px;height:2px;background:#90c4ee"></div>
<!-- excel -->
<svg class="a" style="left:644px;top:737px" width="24" height="21" viewBox="0 0 24 21"><rect x="6" y="0" width="18" height="21" rx="1.5" fill="#21a366"/><rect x="15" y="0" width="9" height="7" fill="#33c481"/><rect x="6" y="14" width="18" height="7" fill="#107c41"/><rect x="0" y="4.5" width="12" height="12" rx="1" fill="#185c37"/><path d="M3 7.3 L9 13.7 M9 7.3 L3 13.7" stroke="#fff" stroke-width="1.8"/></svg>
<div class="a" style="left:636px;top:766px;width:40px;height:2px;background:#90c4ee"></div>
<!-- word -->
<svg class="a" style="left:693px;top:737px" width="24" height="21" viewBox="0 0 24 21"><rect x="6" y="0" width="18" height="21" rx="1.5" fill="#2b7cd3"/><rect x="6" y="0" width="18" height="7" fill="#41a5ee"/><rect x="6" y="14" width="18" height="7" fill="#185abd"/><rect x="0" y="4.5" width="12" height="12" rx="1" fill="#1f4fa8"/><path d="M2 7.5 L3.8 13.5 L6 8.5 L8.2 13.5 L10 7.5" fill="none" stroke="#fff" stroke-width="1.4"/></svg>
<div class="a" style="left:685px;top:766px;width:40px;height:2px;background:#90c4ee"></div>
<!-- chrome active -->
<div class="a" style="left:730px;top:728px;width:48px;height:40px;background:#2b2b2b"></div>
<svg class="a" style="left:741px;top:735px" width="24" height="24" viewBox="0 0 24 24"><circle cx="12" cy="12" r="11.5" fill="#e33b2e"/><path d="M12 12 L22 6.3 A11.5 11.5 0 0 1 12 23.5Z" fill="#f8c02a"/><path d="M12 12 L12 23.5 A11.5 11.5 0 0 1 2 6.3Z" fill="#2ea44f"/><circle cx="12" cy="12" r="5.3" fill="#fff"/><circle cx="12" cy="12" r="4.1" fill="#1a73e8"/></svg>
<div class="a" style="left:753px;top:748px;width:14px;height:14px;border-radius:50%;background:radial-gradient(circle at 45% 40%,#d6d0c8,#8a7c70 70%,#5a4e44);border:1px solid #3a3a3a"></div>
<div class="a" style="left:730px;top:766px;width:48px;height:2px;background:#90c4ee"></div>
<!-- chrome 2 -->
<svg class="a" style="left:791px;top:735px" width="24" height="24" viewBox="0 0 24 24"><circle cx="12" cy="12" r="11.5" fill="#e33b2e"/><path d="M12 12 L22 6.3 A11.5 11.5 0 0 1 12 23.5Z" fill="#f8c02a"/><path d="M12 12 L12 23.5 A11.5 11.5 0 0 1 2 6.3Z" fill="#2ea44f"/><circle cx="12" cy="12" r="5.3" fill="#fff"/><circle cx="12" cy="12" r="4.1" fill="#1a73e8"/></svg>
<div class="a" style="left:802px;top:747px;width:15px;height:15px;border-radius:50%;background:#138a78;border:1px solid #0b0b0b"></div>
<div class="t" style="left:806.5px;top:751px;font-size:8px;font-weight:bold;color:#fff">c</div>
<div class="a" style="left:783px;top:766px;width:40px;height:2px;background:#90c4ee"></div>
<!-- network/globe app -->
<svg class="a" style="left:840px;top:737px" width="22" height="22" viewBox="0 0 22 22"><circle cx="12" cy="10" r="8.5" fill="#3d7fc0"/><path d="M7 4 Q12 7 10 12 Q15 14 18 9 Q19 14 15 17 Q9 19 6 14Z" fill="#74b46a" opacity=".8"/><path d="M1 8 L9 6 L10 14 L3 16Z" fill="#3a3a3a"/><path d="M4 17 L12 19 L11 21 L3 19Z" fill="#ddd"/></svg>
<div class="a" style="left:832px;top:766px;width:40px;height:2px;background:#90c4ee"></div>
<!-- tray -->
<svg class="a" style="left:1012px;top:737px" width="26" height="22" viewBox="0 0 26 22"><circle cx="12" cy="12" r="10" fill="#f6a23a"/><path d="M12 2 A10 10 0 0 0 12 22 Z" fill="#ffb84a"/><ellipse cx="14" cy="18" rx="8" ry="3.5" fill="#c8ddf5"/><circle cx="19" cy="5" r="5" fill="#d63a2a"/><text x="19" y="8" text-anchor="middle" font-family="Liberation Sans" font-weight="bold" font-size="8" fill="#fff">4</text></svg>
<div class="t" style="left:1043.5px;top:741.9px;font-size:12.8px;color:#fff">31°C</div>
<div class="t" style="left:1081.2px;top:741.9px;font-size:12.92px;color:#fff">Cerah</div>
<svg class="a" style="left:1140px;top:742px" width="14" height="9" viewBox="0 0 14 9"><path d="M1 8 L7 1.5 L13 8" fill="none" stroke="#fff" stroke-width="1.3"/></svg>
<svg class="a" style="left:1162px;top:741px" width="18" height="15" viewBox="0 0 18 15"><path d="M3.5 3.5 H17 V11.5 H3.5Z M10.2 11.5 V14.5 M6 14.5 H14" fill="none" stroke="#fff" stroke-width="1.1"/><rect x="0.5" y="0.5" width="5" height="5" fill="#0b0b0b" stroke="#fff" stroke-width="1"/></svg>
<svg class="a" style="left:1186px;top:740px" width="18" height="16" viewBox="0 0 18 16"><path d="M1 5.5 H4 L8.5 1.5 V14.5 L4 10.5 H1Z" fill="none" stroke="#fff" stroke-width="1.1"/><path d="M11 5.5 Q12.3 8 11 10.5 M13.2 3.5 Q15.5 8 13.2 12.5 M15.4 1.5 Q18.6 8 15.4 14.5" fill="none" stroke="#fff" stroke-width="1.1"/></svg>
<div class="t" style="left:1213px;top:743.2px;font-size:10.52px;color:#fff">ENG</div>
<div class="t" style="left:1264.7px;top:733.6px;font-size:10.63px;color:#fff">14.28</div>
<div class="t" style="left:1248.7px;top:751px;font-size:11.61px;color:#fff">02/09/2025</div>
<svg class="a" style="left:1324px;top:740px" width="18" height="16" viewBox="0 0 18 16"><path d="M1 1 H17 V11.5 H11.5 L9 14.5 L6.5 11.5 H1Z" fill="none" stroke="#fff" stroke-width="1.2"/></svg>
<div class="a" style="left:1361px;top:728px;width:1px;height:40px;background:#777"></div>

</body></html>
